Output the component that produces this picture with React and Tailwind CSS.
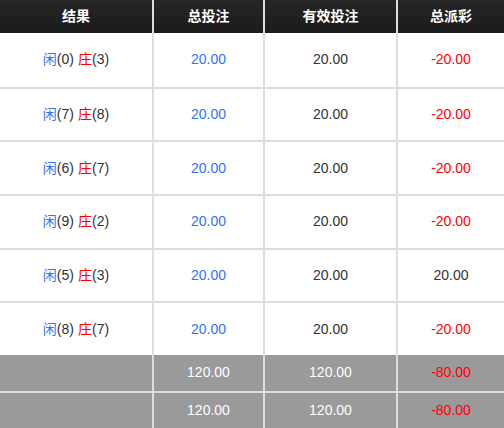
import React from 'react';

const rows = [
  { p: 0, b: 3, bet: '20.00', valid: '20.00', win: '-20.00' },
  { p: 7, b: 8, bet: '20.00', valid: '20.00', win: '-20.00' },
  { p: 6, b: 7, bet: '20.00', valid: '20.00', win: '-20.00' },
  { p: 9, b: 2, bet: '20.00', valid: '20.00', win: '-20.00' },
  { p: 5, b: 3, bet: '20.00', valid: '20.00', win: '20.00' },
  { p: 8, b: 7, bet: '20.00', valid: '20.00', win: '-20.00' },
];

const totals = [
  { bet: '120.00', valid: '120.00', win: '-80.00' },
  { bet: '120.00', valid: '120.00', win: '-80.00' },
];

const cols = 'grid grid-cols-[152px_111px_133px_1fr]';
const cell = 'flex items-center justify-center';
const sep = 'border-l-2 border-[#dddddd]';

function App() {
  return (
    <div
      className="w-[504px] h-[428px] overflow-hidden bg-white text-[14px] text-[#333333]"
      style={{ fontFamily: '"Liberation Sans", Arial, "Noto Sans CJK SC", sans-serif' }}
    >
      {/* Header */}
      <div className={`${cols} h-[33px] bg-gradient-to-b from-[#262626] to-[#1b1b1b] text-white font-bold`}>
        <div className={cell}>结果</div>
        <div className={`${cell} ${sep}`}>总投注</div>
        <div className={`${cell} ${sep}`}>有效投注</div>
        <div className={`${cell} ${sep}`}>总派彩</div>
      </div>

      {/* Body */}
      {rows.map((r, i) => (
        <div
          key={i}
          className={`${cols} h-[53.67px] ${i > 0 ? 'border-t-2 border-[#dddddd]' : ''}`}
        >
          <div className={cell}>
            <span className="text-[#2f74f5]">闲</span>
            <span>({r.p})</span>
            <span className="ml-[4px] text-[#ff0000]">庄</span>
            <span>({r.b})</span>
          </div>
          <div className={`${cell} ${sep} text-[#2f74f5]`}>{r.bet}</div>
          <div className={`${cell} ${sep}`}>{r.valid}</div>
          <div className={`${cell} ${sep} ${r.win.startsWith('-') ? 'text-[#ff0000]' : ''}`}>{r.win}</div>
        </div>
      ))}

      {/* Totals */}
      {totals.map((t, i) => (
        <div
          key={i}
          className={`${cols} h-[38px] bg-[#9a9a9a] text-white border-b-2 border-[#dddddd]`}
        >
          <div className={cell}></div>
          <div className={`${cell} ${sep}`}>{t.bet}</div>
          <div className={`${cell} ${sep}`}>{t.valid}</div>
          <div className={`${cell} ${sep} text-[#ff0000]`}>{t.win}</div>
        </div>
      ))}
    </div>
  );
}

export default App;
